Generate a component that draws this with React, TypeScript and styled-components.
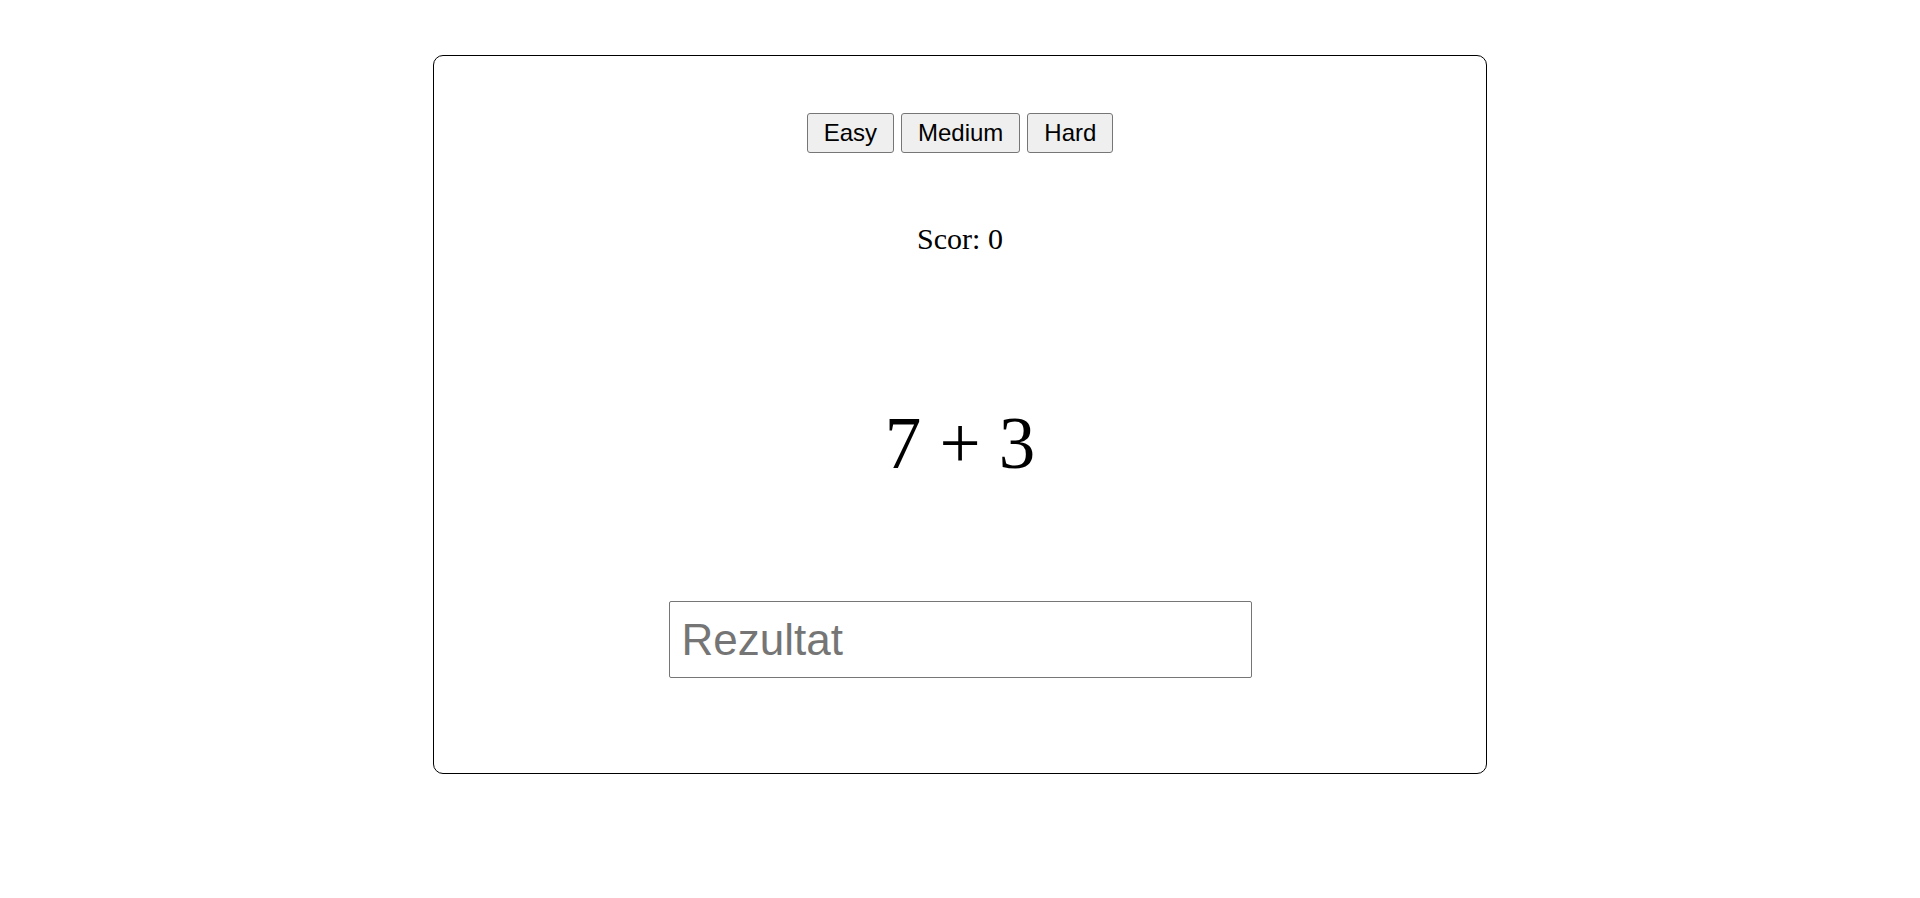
import React, { useState } from "react";
import styled, { createGlobalStyle } from "styled-components";

const GlobalStyle = createGlobalStyle`
  html, body {
    margin: 0;
    padding: 0;
    background: #ffffff;
  }
  body {
    font-family: "Liberation Serif", "Times New Roman", serif;
    color: #000;
  }
`;

const Page = styled.div`
  padding-top: 55px;
  padding-bottom: 124px;
`;

const Card = styled.div`
  box-sizing: border-box;
  width: 1054px;
  height: 719px;
  margin: 0 auto;
  border: 1px solid #000;
  border-radius: 10px;
  display: flex;
  flex-direction: column;
  align-items: center;
  padding-top: 57px;
`;

const Levels = styled.div`
  display: flex;
  gap: 7px;
`;

const LevelButton = styled.button`
  box-sizing: border-box;
  height: 40px;
  padding: 0 16px;
  font-family: "Liberation Sans", Arial, sans-serif;
  font-size: 24px;
  color: #000;
  background: #efefef;
  border: 1px solid #767676;
  border-radius: 3px;
  cursor: pointer;
`;

const Score = styled.div`
  margin-top: 70px;
  font-family: "Liberation Serif", "Times New Roman", serif;
  font-size: 30px;
  line-height: 32px;
`;

const Problem = styled.div`
  margin-top: 148px;
  font-family: "Liberation Serif", "Times New Roman", serif;
  font-size: 73px;
  line-height: 82px;
`;

const Answer = styled.input`
  box-sizing: border-box;
  margin-top: 116px;
  width: 583px;
  height: 77px;
  padding: 0 12px;
  font-family: "Liberation Sans", Arial, sans-serif;
  font-size: 44px;
  color: #000;
  border: 1px solid #767676;
  border-radius: 2px;
  outline: none;
  &::placeholder {
    color: #757575;
  }
`;

export default function App() {
  const [value, setValue] = useState("");
  return (
    <>
      <GlobalStyle />
      <Page>
        <Card>
          <Levels>
            <LevelButton>Easy</LevelButton>
            <LevelButton>Medium</LevelButton>
            <LevelButton>Hard</LevelButton>
          </Levels>
          <Score>Scor: 0</Score>
          <Problem>7 + 3</Problem>
          <Answer
            placeholder="Rezultat"
            value={value}
            onChange={(e) => setValue(e.target.value)}
          />
        </Card>
      </Page>
    </>
  );
}
